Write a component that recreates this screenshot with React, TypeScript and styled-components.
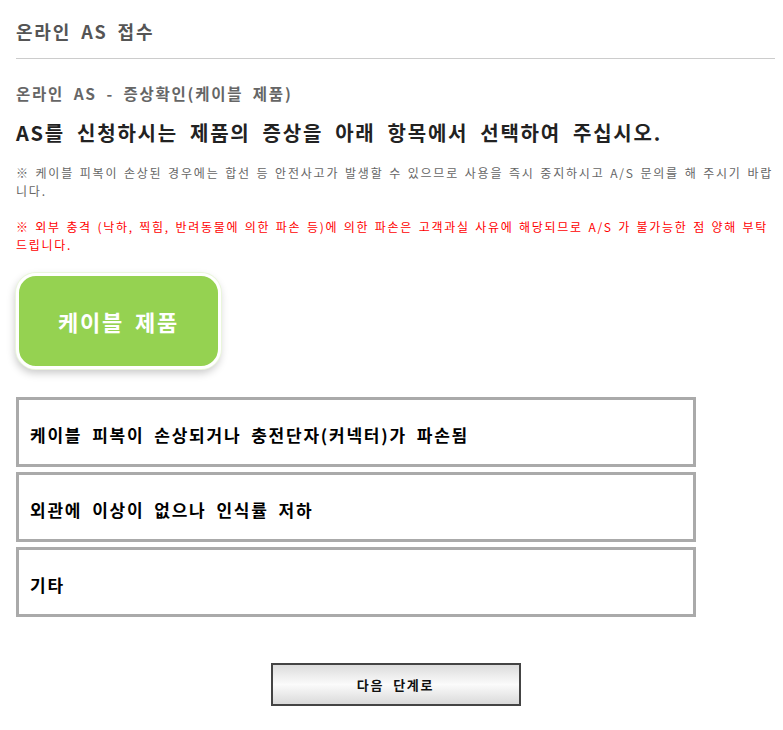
import React, { useState } from 'react';
import styled, { createGlobalStyle } from 'styled-components';

const GlobalStyle = createGlobalStyle`
  body {
    margin: 0;
    padding: 0;
    background: #ffffff;
    font-family: 'Noto Sans CJK KR', 'Noto Sans', sans-serif;
  }
`;

// Noto CJK hangul is narrower than the original face, so widen the pitch a bit
const Page = styled.div`
  padding: 0 8px 30px 16px;
  letter-spacing: 0.11em;
  word-spacing: 0.27em;
`;

const Header = styled.header`
  height: 59px;
  display: flex;
  align-items: center;
  padding-top: 3px;
  box-sizing: border-box;
  border-bottom: 1px solid #cccccc;
`;

const Title = styled.h1`
  margin: 0;
  font-size: 18px;
  line-height: 24px;
  font-weight: 700;
  color: #555555;
`;

const SubTitle = styled.h2`
  margin: 24px 0 0;
  font-size: 15.5px;
  line-height: 20px;
  font-weight: 700;
  color: #666666;
`;

const Heading = styled.h3`
  margin: 16px 0 0;
  font-size: 20px;
  line-height: 28px;
  font-weight: 700;
  color: #222222;
  word-spacing: 0.29em;
`;

const Notice = styled.p<{ $warn?: boolean }>`
  margin: ${p => (p.$warn ? '18px' : '17px')} 0 0;
  font-size: 12px;
  line-height: 18px;
  letter-spacing: ${p => (p.$warn ? '0.142em' : '0.15em')};
  word-spacing: 0.1em;
  color: ${p => (p.$warn ? '#ff0000' : '#666666')};
`;

const ProductButton = styled.button`
  margin-top: 19px;
  width: 205px;
  height: 96px;
  border: 3px solid #ffffff;
  border-radius: 20px;
  background: #95d251;
  box-shadow: 0 0 0 1px #eaf6dc, -1px 4px 8px rgba(0, 0, 0, 0.22);
  color: #ffffff;
  font-family: inherit;
  font-size: 22px;
  font-weight: 700;
  letter-spacing: inherit;
  word-spacing: inherit;
  cursor: pointer;
`;

const OptionList = styled.div`
  margin-top: 28px;
  width: 680px;
  display: flex;
  flex-direction: column;
  gap: 5px;
`;

const Option = styled.div<{ $active: boolean }>`
  height: 70px;
  box-sizing: border-box;
  border: 3px solid ${p => (p.$active ? '#95d251' : '#aaaaaa')};
  display: flex;
  align-items: center;
  padding: 4px 0 0 11px;
  font-size: 17px;
  font-weight: 700;
  color: #000000;
  cursor: pointer;
`;

const Footer = styled.div`
  margin-top: 46px;
  display: flex;
  justify-content: center;
`;

const NextButton = styled.button`
  width: 250px;
  height: 43px;
  border: 2px solid #444444;
  background: linear-gradient(#dcdcdc, #fbfbfb 50%, #dadada);
  font-family: inherit;
  font-size: 13px;
  font-weight: 700;
  letter-spacing: inherit;
  word-spacing: inherit;
  color: #111111;
  cursor: pointer;
`;

const symptoms = [
  '케이블 피복이 손상되거나 충전단자(커넥터)가 파손됨',
  '외관에 이상이 없으나 인식률 저하',
  '기타',
];

const App: React.FC = () => {
  const [selected, setSelected] = useState<number | null>(null);

  return (
    <Page>
      <GlobalStyle />
      <Header>
        <Title>온라인 AS 접수</Title>
      </Header>
      <SubTitle>온라인 AS - 증상확인(케이블 제품)</SubTitle>
      <Heading>AS를 신청하시는 제품의 증상을 아래 항목에서 선택하여 주십시오.</Heading>
      <Notice>
        ※ 케이블 피복이 손상된 경우에는 합선 등 안전사고가 발생할 수 있으므로 사용을 즉시 중지하시고 A/S 문의를 해 주시기 바랍니다.
      </Notice>
      <Notice $warn>
        ※ 외부 충격 (낙하, 찍힘, 반려동물에 의한 파손 등)에 의한 파손은 고객과실 사유에 해당되므로 A/S 가 불가능한 점 양해 부탁드립니다.
      </Notice>
      <ProductButton>케이블 제품</ProductButton>
      <OptionList>
        {symptoms.map((s, i) => (
          <Option key={s} $active={selected === i} onClick={() => setSelected(i)}>
            {s}
          </Option>
        ))}
      </OptionList>
      <Footer>
        <NextButton>다음 단계로</NextButton>
      </Footer>
    </Page>
  );
};

export default App;
